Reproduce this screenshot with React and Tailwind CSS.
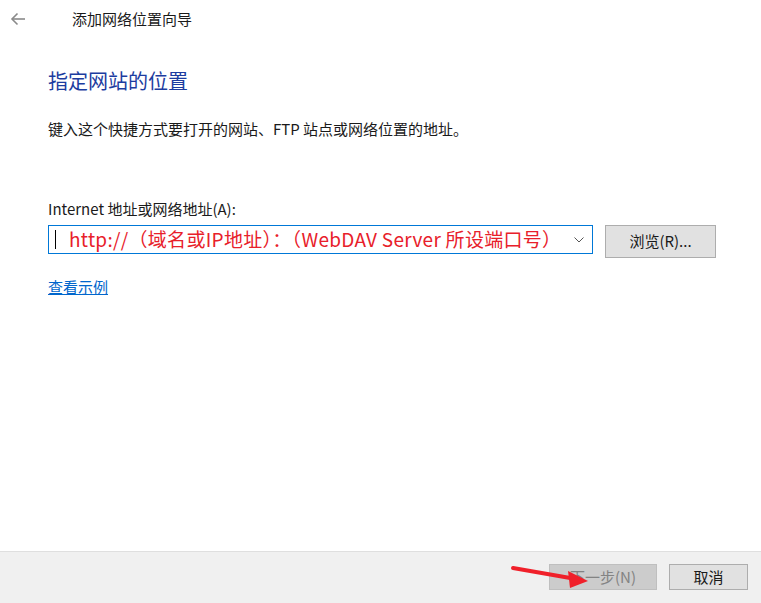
import React from "react";

const font = { fontFamily: '"Microsoft YaHei", "Noto Sans CJK SC", sans-serif' };

const BackArrow = () => (
  <svg width="16" height="14" viewBox="0 0 16 14" fill="none" stroke="#8a8a8a" strokeWidth="1.6">
    <path d="M15 7H2" />
    <path d="M7.5 1.5L2 7l5.5 5.5" />
  </svg>
);

const Chevron = () => (
  <svg width="10" height="6" viewBox="0 0 10 6" fill="none" stroke="#555" strokeWidth="1">
    <path d="M0.5 0.5L5 5L9.5 0.5" />
  </svg>
);

export default function App() {
  return (
    <div className="relative w-[761px] h-[603px] bg-white flex flex-col text-[#1a1a1a]" style={font}>
      {/* title bar */}
      <div className="flex items-center h-[38px] pl-[10px]">
        <BackArrow />
        <span className="ml-[46px] text-[15px]">添加网络位置向导</span>
      </div>

      {/* content */}
      <div className="flex-1 pl-[48px] pr-[45px]">
        <h1 className="mt-[30px] text-[20px] leading-[26px] text-[#1c3ca0]">指定网站的位置</h1>
        <p className="mt-[25px] text-[15px] leading-[20px]">键入这个快捷方式要打开的网站、FTP 站点或网络位置的地址。</p>

        <div className="mt-[60px] text-[15px] leading-[20px]">Internet 地址或网络地址(A):</div>
        <div className="flex items-start mt-[5px]">
          <div className="flex items-center w-[545px] h-[29px] mt-px border border-[#0078d7] pl-[6px] pr-[8px]">
            <span className="w-px h-[19px] bg-black" />
            <span className="ml-[13px] text-[19px] tracking-[0.3px] text-[#e8202a] whitespace-nowrap">http://（域名或IP地址）：（WebDAV Server 所设端口号）</span>
            <span className="ml-auto"><Chevron /></span>
          </div>
          <button className="ml-[12px] w-[111px] h-[33px] mt-px bg-[#e1e1e1] border border-[#adadad] text-[15px]">浏览(R)...</button>
        </div>

        <a className="inline-block mt-[19px] text-[15px] leading-[20px] text-[#0066cc] underline">查看示例</a>
      </div>

      {/* footer */}
      <div className="h-[52px] bg-[#f0f0f0] border-t border-[#dfdfdf] flex items-start justify-end pt-[12px] pr-[13px] gap-[12px]">
        <button className="w-[108px] h-[26px] bg-[#cccccc] border border-[#bfbfbf] text-[15px] text-[#838383]">下一步(N)</button>
        <button className="w-[79px] h-[26px] bg-[#e1e1e1] border border-[#adadad] text-[15px]">取消</button>
      </div>

      {/* red annotation arrow */}
      <svg className="absolute left-[508px] top-[560px]" width="85" height="30" viewBox="0 0 85 30">
        <path d="M5 8L68 19" stroke="#f0202a" strokeWidth="4" strokeLinecap="round" />
        <path d="M80 21L60 11L62 28Z" fill="#f0202a" />
      </svg>
    </div>
  );
}
